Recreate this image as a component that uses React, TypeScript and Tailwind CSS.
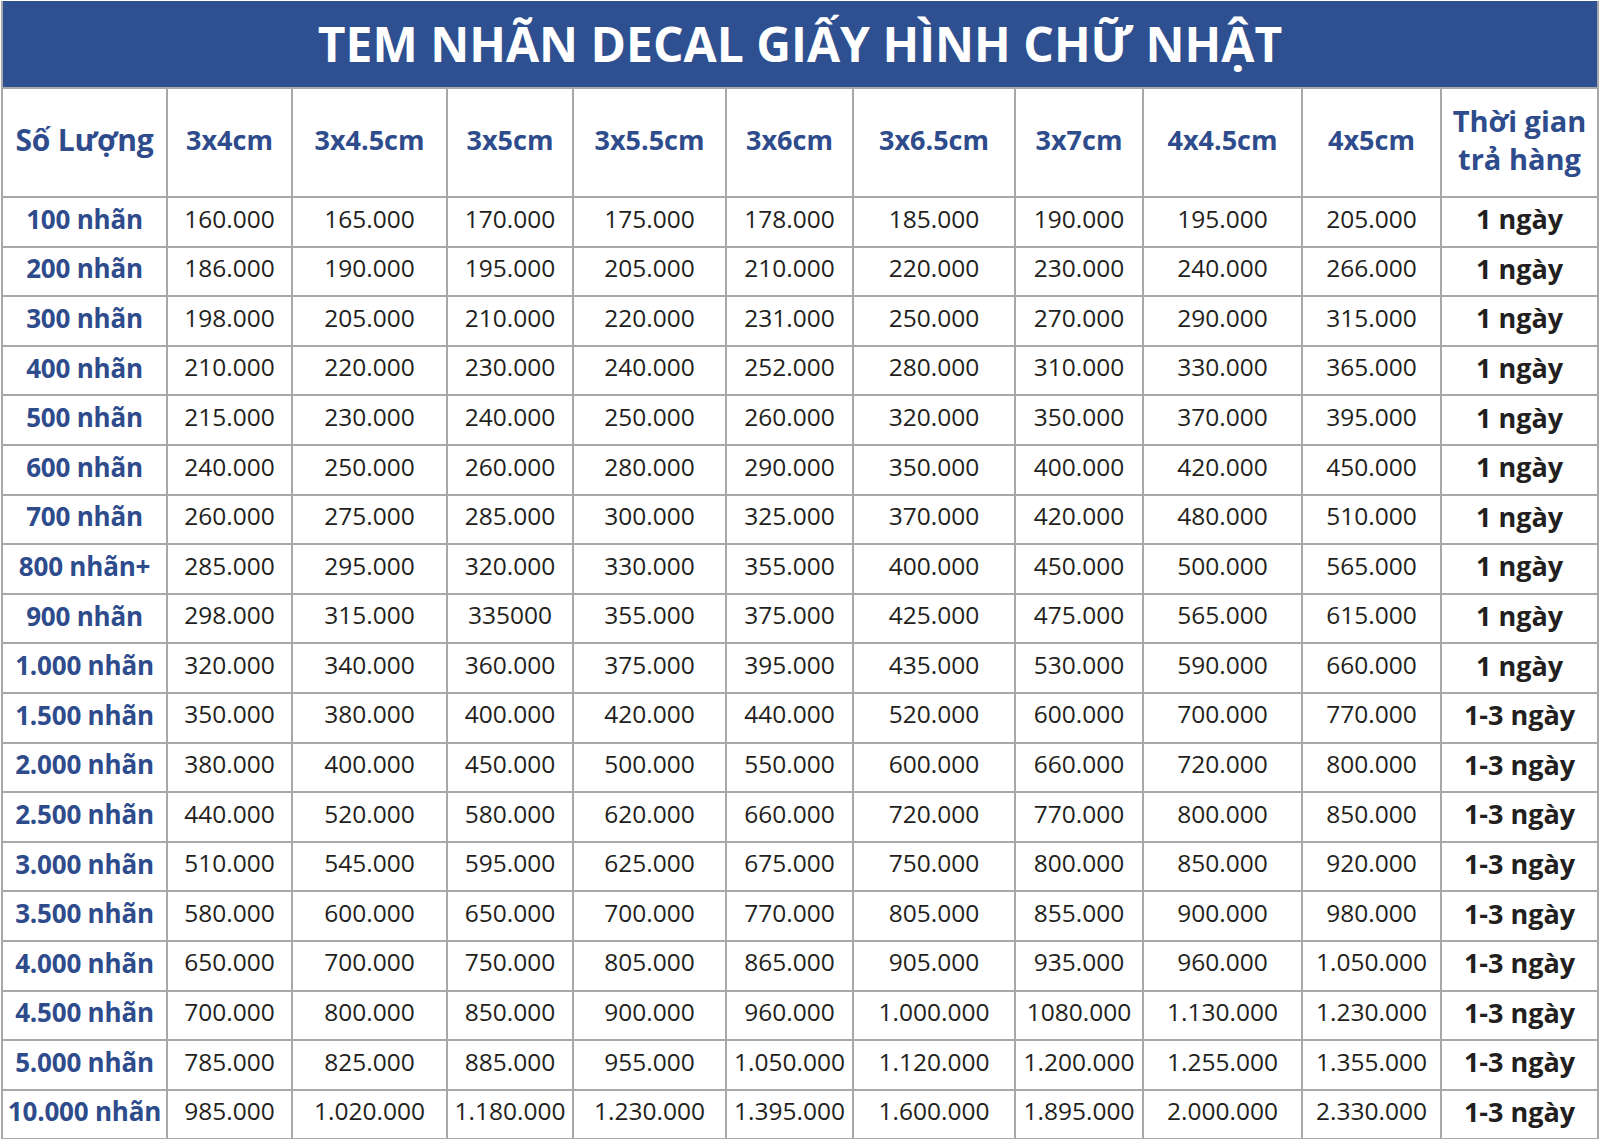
const sizes = ['3x4cm', '3x4.5cm', '3x5cm', '3x5.5cm', '3x6cm', '3x6.5cm', '3x7cm', '4x4.5cm', '4x5cm'];

const colWidths = [165, 125, 155, 126, 153, 127, 162, 128, 159, 139, 157];

const rows: [string, string[], string][] = [
  ['100 nhãn', ['160.000', '165.000', '170.000', '175.000', '178.000', '185.000', '190.000', '195.000', '205.000'], '1 ngày'],
  ['200 nhãn', ['186.000', '190.000', '195.000', '205.000', '210.000', '220.000', '230.000', '240.000', '266.000'], '1 ngày'],
  ['300 nhãn', ['198.000', '205.000', '210.000', '220.000', '231.000', '250.000', '270.000', '290.000', '315.000'], '1 ngày'],
  ['400 nhãn', ['210.000', '220.000', '230.000', '240.000', '252.000', '280.000', '310.000', '330.000', '365.000'], '1 ngày'],
  ['500 nhãn', ['215.000', '230.000', '240.000', '250.000', '260.000', '320.000', '350.000', '370.000', '395.000'], '1 ngày'],
  ['600 nhãn', ['240.000', '250.000', '260.000', '280.000', '290.000', '350.000', '400.000', '420.000', '450.000'], '1 ngày'],
  ['700 nhãn', ['260.000', '275.000', '285.000', '300.000', '325.000', '370.000', '420.000', '480.000', '510.000'], '1 ngày'],
  ['800 nhãn+', ['285.000', '295.000', '320.000', '330.000', '355.000', '400.000', '450.000', '500.000', '565.000'], '1 ngày'],
  ['900 nhãn', ['298.000', '315.000', '335000', '355.000', '375.000', '425.000', '475.000', '565.000', '615.000'], '1 ngày'],
  ['1.000 nhãn', ['320.000', '340.000', '360.000', '375.000', '395.000', '435.000', '530.000', '590.000', '660.000'], '1 ngày'],
  ['1.500 nhãn', ['350.000', '380.000', '400.000', '420.000', '440.000', '520.000', '600.000', '700.000', '770.000'], '1-3 ngày'],
  ['2.000 nhãn', ['380.000', '400.000', '450.000', '500.000', '550.000', '600.000', '660.000', '720.000', '800.000'], '1-3 ngày'],
  ['2.500 nhãn', ['440.000', '520.000', '580.000', '620.000', '660.000', '720.000', '770.000', '800.000', '850.000'], '1-3 ngày'],
  ['3.000 nhãn', ['510.000', '545.000', '595.000', '625.000', '675.000', '750.000', '800.000', '850.000', '920.000'], '1-3 ngày'],
  ['3.500 nhãn', ['580.000', '600.000', '650.000', '700.000', '770.000', '805.000', '855.000', '900.000', '980.000'], '1-3 ngày'],
  ['4.000 nhãn', ['650.000', '700.000', '750.000', '805.000', '865.000', '905.000', '935.000', '960.000', '1.050.000'], '1-3 ngày'],
  ['4.500 nhãn', ['700.000', '800.000', '850.000', '900.000', '960.000', '1.000.000', '1080.000', '1.130.000', '1.230.000'], '1-3 ngày'],
  ['5.000 nhãn', ['785.000', '825.000', '885.000', '955.000', '1.050.000', '1.120.000', '1.200.000', '1.255.000', '1.355.000'], '1-3 ngày'],
  ['10.000 nhãn', ['985.000', '1.020.000', '1.180.000', '1.230.000', '1.395.000', '1.600.000', '1.895.000', '2.000.000', '2.330.000'], '1-3 ngày'],
];

export default function App() {
  return (
    <div className="w-[1600px] h-[1139px] bg-white pt-px px-[1px] font-['Open_Sans',sans-serif]">
      <div className="h-[86px] bg-[#2e5090] flex items-center justify-center border-x-2 border-[#a8a8a8]">
        <h1 className="text-[48px] font-bold text-white leading-none">
          TEM NHÃN DECAL GIẤY HÌNH CHỮ NHẬT
        </h1>
      </div>
      <table className="table-fixed border-collapse w-[1598px]">
        <colgroup>
          {colWidths.map((w, i) => (
            <col key={i} style={{ width: w }} />
          ))}
        </colgroup>
        <thead>
          <tr className="h-[109px]">
            <th className="border-2 border-[#a8a8a8] text-[#2e4b8c] text-[30px] font-bold leading-none whitespace-nowrap tracking-[-0.2px] pb-[6px]">
              Số Lượng
            </th>
            {sizes.map((s) => (
              <th key={s} className="border-2 border-[#a8a8a8] text-[#2e4b8c] text-[27px] font-bold leading-none whitespace-nowrap pb-[6px]">
                {s}
              </th>
            ))}
            <th className="border-2 border-[#a8a8a8] text-[#2e4b8c] text-[29px] font-bold leading-[38px] pb-[6px] whitespace-nowrap">
              Thời gian
              <br />
              trả hàng
            </th>
          </tr>
        </thead>
        <tbody>
          {rows.map(([qty, prices, time]) => (
            <tr key={qty} className="h-[49.6px]">
              <td className="border-2 border-[#a8a8a8] text-center text-[#2e4b8c] text-[26px] font-bold leading-none whitespace-nowrap pb-[6px] tracking-[-0.2px]">
                {qty}
              </td>
              {prices.map((p, i) => (
                <td key={i} className="border-2 border-[#a8a8a8] text-center text-[#231f20] text-[24.5px] leading-none whitespace-nowrap pb-[6px]">
                  {p}
                </td>
              ))}
              <td className="border-2 border-[#a8a8a8] text-center text-[#231f20] text-[27px] font-bold leading-none whitespace-nowrap pb-[6px]">
                {time}
              </td>
            </tr>
          ))}
        </tbody>
      </table>
    </div>
  );
}
